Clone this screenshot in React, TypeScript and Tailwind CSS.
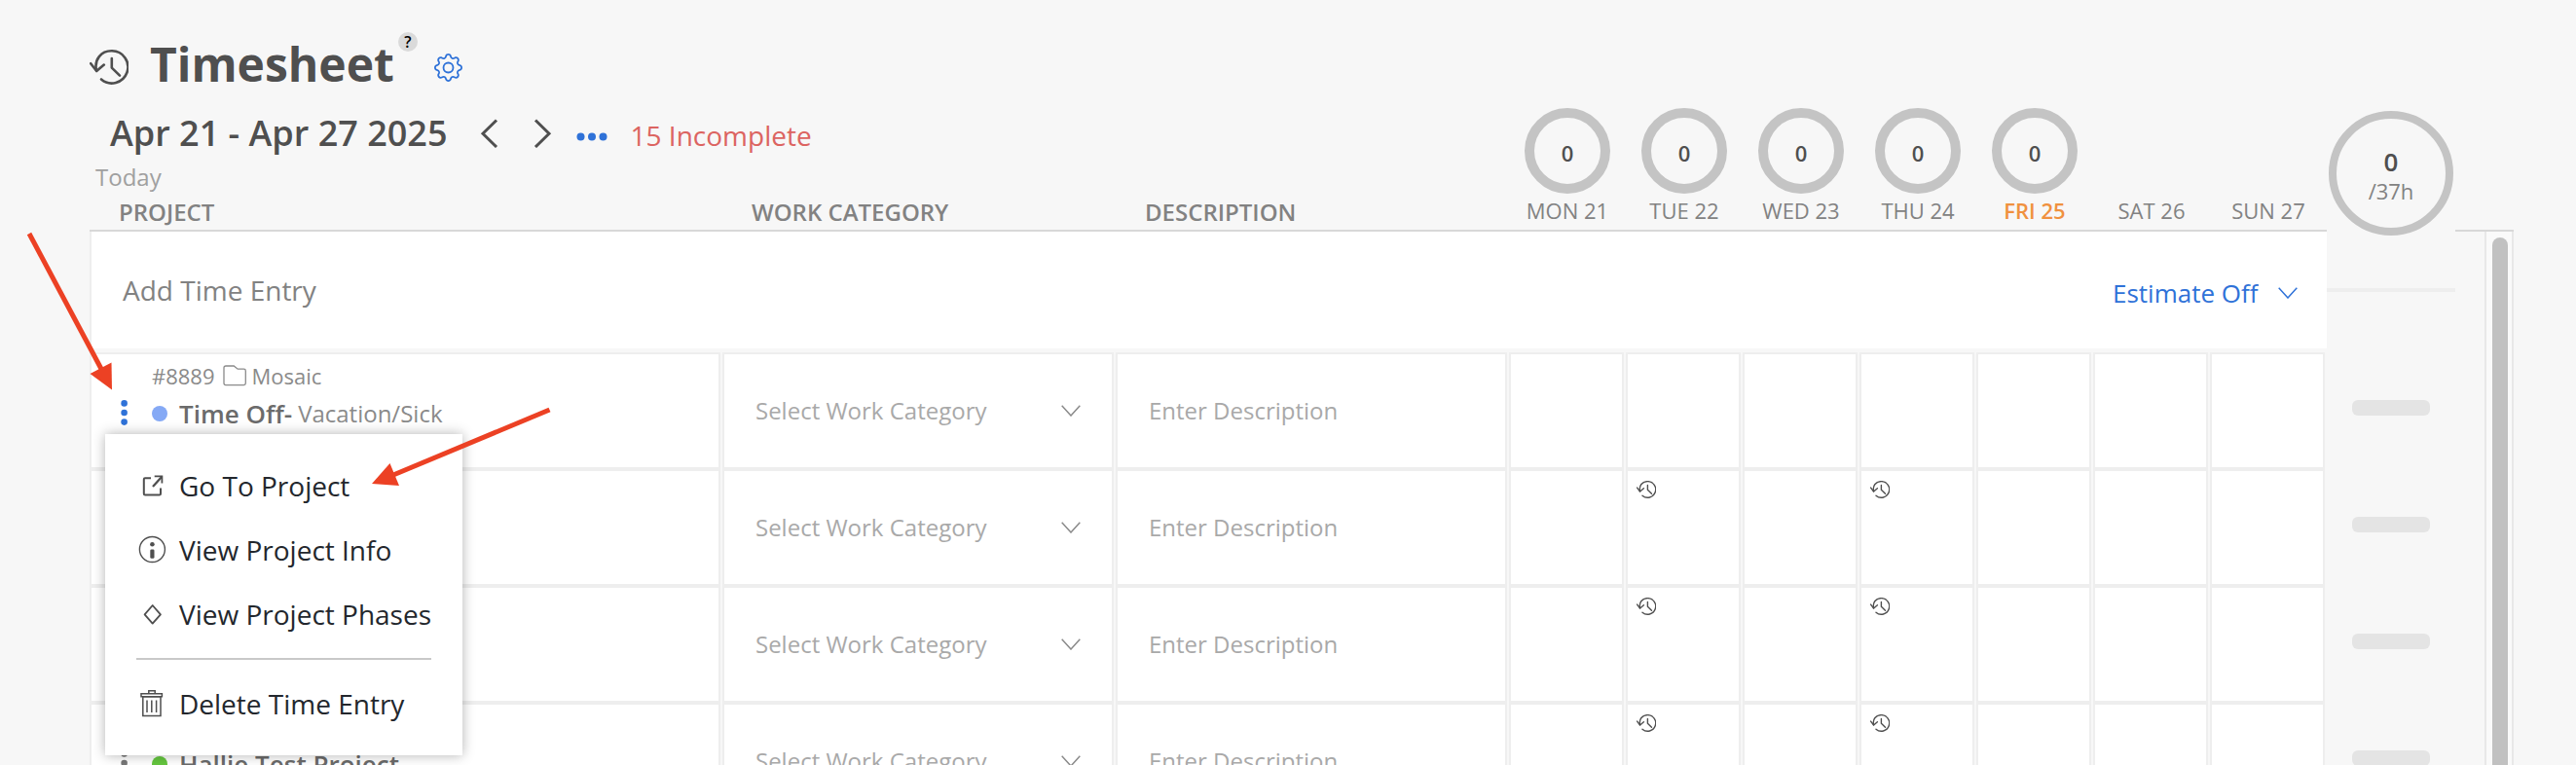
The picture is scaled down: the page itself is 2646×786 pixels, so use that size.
import clsx from 'clsx';
import { ReactNode } from 'react';
import { BsGear } from 'react-icons/bs';

type Day = { label: string; total?: string; today?: boolean };

type Entry = {
  id: number;
  code?: string;
  client?: string;
  name?: string;
  phase?: string;
  color?: string;
  estimates: string[];
};

const days: Day[] = [
  { label: 'MON 21', total: '0' },
  { label: 'TUE 22', total: '0' },
  { label: 'WED 23', total: '0' },
  { label: 'THU 24', total: '0' },
  { label: 'FRI 25', total: '0', today: true },
  { label: 'SAT 26' },
  { label: 'SUN 27' },
];

const entries: Entry[] = [
  {
    id: 1,
    code: '#8889',
    client: 'Mosaic',
    name: 'Time Off-',
    phase: 'Vacation/Sick',
    color: 'bg-[#85a9f5]',
    estimates: [],
  },
  { id: 2, estimates: ['TUE 22', 'THU 24'] },
  { id: 3, estimates: ['TUE 22', 'THU 24'] },
  {
    id: 4,
    name: 'Hallie Test Project',
    color: 'bg-[#65c63f]',
    estimates: ['TUE 22', 'THU 24'],
  },
];

const HistoryIcon = ({
  className,
  strokeWidth,
}: {
  className: string;
  strokeWidth: number;
}) => (
  <svg
    viewBox="0 0 40 36"
    className={className}
    fill="none"
    stroke="#4f4f4f"
    strokeWidth={strokeWidth}
    strokeLinecap="round"
    strokeLinejoin="round"
  >
    <path d="M7 21.5C4.5 10 12 1.3 22.5 1.3A16.6 16.6 0 1 1 12 30.5" />
    <path d="M1.2 14.2L7.2 22L14.8 15.6" />
    <path d="M22.8 9V18.6L31 26.6" />
  </svg>
);

const Chevron = ({ className }: { className: string }) => (
  <svg
    viewBox="0 0 20 12"
    className={clsx('h-3 w-5 pointer-events-none', className)}
    fill="none"
    stroke="currentColor"
    strokeWidth={1.5}
  >
    <path d="M0.7 0.7L10 11L19.3 0.7" />
  </svg>
);

const FolderIcon = () => (
  <svg viewBox="0 0 24 22" className="h-[22px] w-6" fill="none" stroke="#8a8a8a" strokeWidth={1.3}>
    <path d="M3 1H11.2L15.2 4.2H21.5Q23.3 4.2 23.3 6V18.8Q23.3 20.6 21.5 20.6H2.8Q1 20.6 1 18.8V3Q1 1 3 1Z" />
  </svg>
);

const VerticalDots = () => (
  <svg viewBox="0 0 8 28" className="h-7 w-2" fill="currentColor">
    <circle cx="3.6" cy="3.4" r="3.3" />
    <circle cx="3.6" cy="13" r="3.3" />
    <circle cx="3.6" cy="22.6" r="3.3" />
  </svg>
);

const MenuIcon = ({ children }: { children: ReactNode }) => (
  <svg viewBox="0 0 32 32" className="size-8" fill="none" stroke="#4f4f4f" strokeWidth={1.8}>
    {children}
  </svg>
);

const MenuItem = ({ icon, label }: { icon: ReactNode; label: string }) => (
  <button type="button" role="menuitem" className="flex h-[66px] items-center gap-3 text-[28px]">
    <MenuIcon>{icon}</MenuIcon>
    {label}
  </button>
);

const EntryMenu = () => (
  <div
    role="menu"
    className="absolute left-[14px] top-[82px] z-10 flex w-max flex-col bg-white px-8 py-5 text-[#23272d] shadow-[0_0_12px_rgba(0,0,0,0.3)]"
  >
    <MenuItem
      label="Go To Project"
      icon={
        <>
          <path
            d="M15 8.3H9Q7.8 8.3 7.8 9.5V24.2Q7.8 25.4 9 25.4H23.8Q25 25.4 25 24.2V18.6"
            strokeWidth={2}
          />
          <path d="M17 17L26 7" strokeWidth={2.3} />
          <path d="M18.7 6.3H26.4V13.6" />
        </>
      }
    />
    <MenuItem
      label="View Project Info"
      icon={
        <>
          <circle cx="16.4" cy="15.5" r="13" strokeWidth={1.4} />
          <circle cx="16.4" cy="10.2" r="2.3" fill="#4f4f4f" stroke="none" />
          <rect x="14.3" y="15.4" width="4.2" height="9.4" rx="1.4" fill="#4f4f4f" stroke="none" />
        </>
      }
    />
    <MenuItem
      label="View Project Phases"
      icon={<path d="M16.7 7L24.9 16.3L16.7 25.6L8.6 16.3Z" strokeLinejoin="round" />}
    />
    <hr className="my-3 border-t-2 border-[#c9c9c9]" />
    <MenuItem
      label="Delete Time Entry"
      icon={
        <g strokeWidth={1.5}>
          <path d="M5 5.8H26.4V8.8H5Z" />
          <path d="M12.8 5.6V2.8H19.2V5.6" />
          <path d="M6.8 8.8H25V28.4H6.8Z" />
          <path d="M11 12.4V25M15.8 12.4V25M20.6 12.4V25" />
        </g>
      }
    />
  </div>
);

const ProjectCell = ({ entry, menuOpen }: { entry: Entry; menuOpen: boolean }) => (
  <div className="relative h-30 border-2 border-[#eee] bg-white pt-[7px] text-[#8a8a8a]">
    <div className="flex h-[30px] items-center pl-[62px] text-[22px]">
      {entry.code && (
        <>
          <span className="mr-2">{entry.code}</span>
          <FolderIcon />
          <span className="ml-1.5">{entry.client}</span>
        </>
      )}
    </div>
    {entry.name && (
      <div className="mt-[9px] flex h-[30px] items-center pl-[30px] text-2xl">
        <button
          type="button"
          aria-label="Entry actions"
          className={clsx('mr-6', menuOpen ? 'text-[#2f72d8]' : 'text-[#777]')}
        >
          <VerticalDots />
        </button>
        <span className={clsx('mr-3 size-4 rounded-full', entry.color)} />
        <span className="text-[26px] font-semibold text-[#6b6b6b]">{entry.name}</span>
        <span className="ml-1.5">{entry.phase}</span>
      </div>
    )}
    {menuOpen && <EntryMenu />}
  </div>
);

const EntryRow = ({ entry }: { entry: Entry }) => (
  <tr>
    <td className="p-0 pr-0.5">
      <ProjectCell entry={entry} menuOpen={entry.id === 1} />
    </td>
    <td className="p-0 pr-0.5">
      <div className="relative flex h-30 items-center border-2 border-[#eee] bg-white">
        <select
          aria-label="Work category"
          className="h-full w-full appearance-none bg-transparent px-8 text-2xl text-[#a9a9a9] outline-none"
        >
          <option>Select Work Category</option>
        </select>
        <Chevron className="absolute right-8 text-[#8a8a8a]" />
      </div>
    </td>
    <td className="p-0 pr-0.5">
      <div className="h-30 border-2 border-[#eee] bg-white">
        <input
          type="text"
          aria-label="Description"
          placeholder="Enter Description"
          className="block h-full w-full bg-transparent pb-0.5 pl-8 text-2xl outline-none placeholder:text-[#a9a9a9]"
        />
      </div>
    </td>
    {days.map((day) => (
      <td key={day.label} className="p-0 pr-0.5">
        <div className="relative h-30 border-2 border-[#eee] bg-white">
          <input
            type="text"
            aria-label={`Hours ${day.label}`}
            className="block h-full w-full bg-transparent text-center text-2xl outline-none"
          />
          {entry.estimates.includes(day.label) && (
            <button type="button" aria-label="Use estimate" className="absolute left-[9px] top-2.5">
              <HistoryIcon className="h-[18px] w-5" strokeWidth={2.8} />
            </button>
          )}
        </div>
      </td>
    ))}
    <td className="p-0 pb-1.5">
      <div className="mx-auto h-4 w-20 rounded-md bg-[#e4e4e4]" />
    </td>
  </tr>
);

const WeekNav = () => (
  <div className="h-24 text-left font-normal">
    <div className="flex h-16 items-baseline pl-[21px]">
      <span className="text-4xl/17 font-semibold text-[#4f4f4f]">Apr 21 - Apr 27 2025</span>
      <button type="button" aria-label="Previous week" className="ml-8 self-center">
        <svg viewBox="0 0 20 34" className="h-[34px] w-5" fill="none" stroke="#4f4f4f" strokeWidth={3}>
          <path d="M18 5.5L4 19.3L18 33" />
        </svg>
      </button>
      <button type="button" aria-label="Next week" className="ml-9 self-center">
        <svg viewBox="0 0 20 34" className="h-[34px] w-5" fill="none" stroke="#4f4f4f" strokeWidth={3}>
          <path d="M2 5.5L16 19.3L2 33" />
        </svg>
      </button>
      <button type="button" aria-label="More options" className="ml-6 self-center">
        <svg viewBox="0 0 32 20" className="h-5 w-8" fill="#2f72d8">
          <circle cx="4.5" cy="15.5" r="4" />
          <circle cx="16" cy="15.5" r="4" />
          <circle cx="27.5" cy="15.5" r="4" />
        </svg>
      </button>
      <a href="#incomplete" className="ml-6 text-[28px] text-[#dc6461]">
        15 Incomplete
      </a>
    </div>
    <button type="button" className="block pl-1.5 text-2xl/[30px] text-[#a0a0a0]">
      Today
    </button>
  </div>
);

const Heading = ({ children }: { children: ReactNode }) => (
  <th
    scope="col"
    className="h-[39px] border-b-2 border-[#d8d8d8] p-0 pl-[30px] text-left text-2xl/[36px] font-semibold text-[#828282]"
  >
    {children}
  </th>
);

const TimesheetTable = () => (
  <table className="w-full table-fixed border-separate border-spacing-0">
    <colgroup>
      <col />
      <col className="w-[404px]" />
      <col className="w-[404px]" />
      {days.map((day) => (
        <col key={day.label} className="w-30" />
      ))}
      <col className="w-33" />
    </colgroup>
    <thead>
      <tr>
        <td colSpan={3} className="p-0 align-top">
          <WeekNav />
        </td>
        {days.map((day) => (
          <td key={day.label} className="p-0 pt-2 align-top">
            {day.total && (
              <div className="ml-4 flex size-22 items-center justify-center rounded-full border-10 border-[#c4c4c4] pt-1 text-[22px] font-semibold text-[#4f4f4f]">
                {day.total}
              </div>
            )}
          </td>
        ))}
        {/* week total spans down beside the add row */}
        <td rowSpan={3} className="p-0 pt-[11px] align-top">
          <div className="mx-auto flex size-32 flex-col items-center justify-center rounded-full border-8 border-[#c4c4c4] pt-1.5">
            <span className="text-[26px]/[30px] font-semibold text-[#4f4f4f]">0</span>
            <span className="text-[22px]/[30px] text-[#828282]">/37h</span>
          </div>
          <div className="mt-[54px] h-1 bg-[#eee]" />
        </td>
      </tr>
      <tr>
        <Heading>PROJECT</Heading>
        <Heading>WORK CATEGORY</Heading>
        <Heading>DESCRIPTION</Heading>
        {days.map((day) => (
          <th
            key={day.label}
            scope="col"
            className={clsx(
              'border-b-2 border-[#d8d8d8] p-0 text-center align-top text-[22px]/[34px]',
              day.today ? 'font-semibold text-[#f0913f]' : 'font-normal text-[#828282]',
            )}
          >
            {day.label}
          </th>
        ))}
      </tr>
      <tr>
        <td colSpan={10} className="p-0 pb-1">
          <div className="flex h-30 items-center justify-between border-l-2 border-[#eee] bg-white pl-8 pr-[30px]">
            <button type="button" className="text-[28px] text-[#828282]">
              Add Time Entry
            </button>
            <div className="relative flex items-center pt-1.5 text-[#2f72d8]">
              <select
                aria-label="Estimate"
                className="appearance-none bg-transparent pr-10 text-[26px] outline-none"
              >
                <option>Estimate Off</option>
              </select>
              <Chevron className="absolute right-0" />
            </div>
          </div>
        </td>
      </tr>
    </thead>
    <tbody>
      {entries.map((entry) => (
        <EntryRow key={entry.id} entry={entry} />
      ))}
    </tbody>
  </table>
);

const Arrows = () => (
  <svg
    className="pointer-events-none absolute left-0 top-0 z-20 h-[520px] w-[600px]"
    viewBox="0 0 600 520"
    stroke="#ec4124"
    strokeWidth={5}
    fill="none"
  >
    <path d="M30 240L104 379" />
    <path d="M115 400.5L92.5 384L114.5 372.5Z" fill="#ec4124" stroke="none" />
    <path d="M564.5 421L404 488" />
    <path d="M382 497L400.5 476L410 499Z" fill="#ec4124" stroke="none" />
  </svg>
);

export default function App() {
  return (
    <main className="relative h-screen overflow-hidden bg-[#f7f7f7] pl-23 pr-16 font-['Open_Sans',sans-serif]">
      <header className="flex items-center pb-1 pt-[33px]">
        <HistoryIcon className="mt-1.5 h-9 w-10" strokeWidth={2.6} />
        <h1 className="ml-[22px] text-5xl/[66px] font-bold text-[#4f4f4f]">Timesheet</h1>
        <button
          type="button"
          aria-label="Help"
          className="ml-1 flex size-5 items-center justify-center self-start rounded-full bg-[#dadada] text-base font-semibold text-black"
        >
          ?
        </button>
        <button type="button" aria-label="Settings" className="ml-[17px] mt-1.5 text-[#2f72d8]">
          <BsGear className="size-[29px]" />
        </button>
      </header>
      <div className="flex">
        <div className="min-w-0 flex-1">
          <TimesheetTable />
        </div>
        {/* scrollbar */}
        <div className="mt-[133px] flex w-15 justify-end border-t-2 border-[#d8d8d8]">
          <div className="flex w-[30px] border-x-2 border-[#e8e8e8] bg-[#fafafa] pl-1.5 pt-1.5">
            <div className="w-4 rounded-full bg-[#c1c1c1]" />
          </div>
        </div>
      </div>
      <Arrows />
    </main>
  );
}
